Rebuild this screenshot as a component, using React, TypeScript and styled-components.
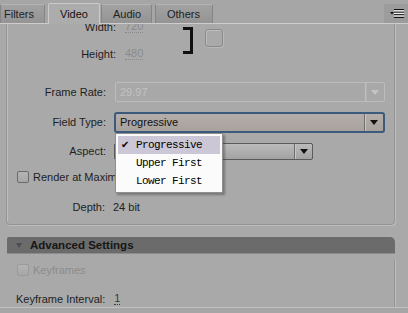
import * as React from 'react';
import styled, { createGlobalStyle, css } from 'styled-components';

const Global = createGlobalStyle`
    html, body {
        margin: 0;
        padding: 0;
        background: #a9a9a9;
    }
    body {
        font-family: 'Liberation Sans', Arial, sans-serif;
        font-size: 11px;
        color: #1e1e1e;
    }
`;

const Panel = styled.div`
    position: relative;
    width: 408px;
    height: 313px;
    overflow: hidden;
    background: #a9a9a9;
    display: flex;
    flex-direction: column;
`;

const TabBar = styled.div`
    height: 23px;
    flex: none;
    display: flex;
    align-items: flex-end;
    border-bottom: 1px solid #cdcdcd;
    background: #a6a6a6;
`;

const Tab = styled.div<{ $w: number; $pl: number; $mr: number; $active?: boolean }>`
    width: ${(p) => p.$w}px;
    margin-right: ${(p) => p.$mr}px;
    padding-left: ${(p) => p.$pl}px;
    box-sizing: border-box;
    height: 19px;
    display: flex;
    align-items: center;
    color: #222;
    background: linear-gradient(#a2a2a2, #949494);
    border: 1px solid #858585;
    border-top-color: #b4b4b4;
    border-bottom: none;
    border-radius: 2px 2px 0 0;
    ${(p) =>
        p.$active &&
        css`
            height: 21px;
            margin-bottom: -1px;
            background: #acacac;
            border-color: #cbcbcb;
            color: #111;
        `}
`;

const TabSpacer = styled.div`
    flex: 1;
`;

const MenuButton = styled.div`
    width: 24px;
    height: 19px;
    display: flex;
    align-items: center;
    justify-content: center;
    background: #9c9c9c;
`;

const Scroller = styled.div`
    flex: 1;
    overflow: hidden;
    position: relative;
`;

// content is scrolled down a little, so the first row sits under the tab bar
const ScrollInner = styled.div`
    margin-top: -12px;
    padding: 0 13px 0 6px;
`;

const GroupBox = styled.div`
    position: relative;
    border: 1px solid #949494;
    box-shadow: 1px 1px 0 #bdbdbd, inset 1px 1px 0 #bdbdbd;
    border-radius: 0 0 4px 4px;
    padding: 0 0 6px 0;
`;

const SizeBlock = styled.div`
    display: flex;
    align-items: flex-start;
`;

const SizeColumn = styled.div`
    width: 176px;
    display: flex;
    flex-direction: column;
`;

const Row = styled.div<{ $h: number; $mt?: number; $pl?: number }>`
    height: ${(p) => p.$h}px;
    margin-top: ${(p) => p.$mt || 0}px;
    padding-left: ${(p) => p.$pl || 0}px;
    display: flex;
    align-items: center;
    position: relative;
`;

const Label = styled.div<{ $w: number; $gap: number }>`
    width: ${(p) => p.$w}px;
    margin-right: ${(p) => p.$gap}px;
    text-align: right;
    flex: none;
    white-space: nowrap;
`;

const PlainLabel = styled.span<{ $gap: number }>`
    margin-right: ${(p) => p.$gap}px;
    white-space: nowrap;
`;

const Scrub = styled.span`
    color: #8a8a8a;
    border-bottom: 1px dotted #8a8a8a;
    line-height: 11px;
`;

const ScrubDark = styled(Scrub)`
    color: #3a3a3a;
    border-bottom-color: #3a3a3a;
`;

const Bracket = styled.div`
    width: 7px;
    height: 21px;
    margin-top: 14px;
    border: 3px solid #111;
    border-left: none;
`;

const LinkBox = styled.div`
    width: 18px;
    height: 18px;
    box-sizing: border-box;
    margin: 16px 0 0 12px;
    border: 1px solid #8a8a8a;
    border-radius: 3px;
    box-shadow: inset 1px 1px 0 #bcbcbc, 1px 1px 0 #b8b8b8;
`;

const SelectBox = styled.div<{ $w: number; $kind: 'disabled' | 'focused' | 'normal'; $h: number }>`
    width: ${(p) => p.$w}px;
    height: ${(p) => p.$h}px;
    box-sizing: border-box;
    display: flex;
    align-items: stretch;
    position: relative;
    border-radius: 2px;
    ${(p) =>
        p.$kind === 'disabled' &&
        css`
            border: 1px solid #bcbcbc;
            background: #a8a8a8;
            color: #c2c2c2;
        `}
    ${(p) =>
        p.$kind === 'focused' &&
        css`
            border: 2px solid #3b5a7c;
            border-radius: 3px;
            background: linear-gradient(#b4adaa, #a8a29f);
            color: #111;
        `}
    ${(p) =>
        p.$kind === 'normal' &&
        css`
            border: 1px solid #5a5a5a;
            background: linear-gradient(#bbbbbb, #a2a2a2);
            color: #111;
        `}
`;

const SelectText = styled.div`
    flex: 1;
    display: flex;
    align-items: center;
    padding-left: 4px;
    white-space: nowrap;
    overflow: hidden;
`;

const SelectArrow = styled.div<{ $w: number; $dim?: boolean }>`
    width: ${(p) => p.$w}px;
    flex: none;
    display: flex;
    align-items: center;
    justify-content: center;
    border-left: 1px solid ${(p) => (p.$dim ? '#c0c0c0' : '#6c6c6c')};
    box-shadow: inset 1px 0 0 ${(p) => (p.$dim ? '#b2b2b2' : '#c8c8c8')};
    &::after {
        content: '';
        border-left: 4px solid transparent;
        border-right: 4px solid transparent;
        border-top: 5px solid ${(p) => (p.$dim ? '#c4c4c4' : '#111')};
    }
`;

const Check = styled.div<{ $dim?: boolean }>`
    width: 12px;
    height: 12px;
    box-sizing: border-box;
    flex: none;
    border: 1px solid ${(p) => (p.$dim ? '#9a9a9a' : '#6a6a6a')};
    border-radius: 2px;
    background: linear-gradient(#b4b4b4, #a6a6a6);
    margin-right: 4px;
`;

const CheckLabel = styled.span<{ $dim?: boolean }>`
    color: ${(p) => (p.$dim ? '#8c8c8c' : '#1e1e1e')};
    white-space: nowrap;
`;

const DropMenu = styled.div`
    position: absolute;
    left: -1px;
    top: calc(100% + 2px);
    width: 108px;
    box-sizing: border-box;
    padding: 2px;
    background: #fbfbfb;
    border: 1px solid #8e8e8e;
    box-shadow: 2px 2px 2px rgba(60, 60, 60, 0.45);
    z-index: 5;
`;

const MenuItem = styled.div<{ $selected?: boolean }>`
    height: 18px;
    display: flex;
    align-items: center;
    font-family: 'Liberation Mono', 'Courier New', monospace;
    font-size: 11px;
    letter-spacing: -0.6px;
    color: #000;
    background: ${(p) => (p.$selected ? '#cbc7d6' : 'transparent')};
`;

const MenuCheck = styled.span`
    width: 15px;
    padding-left: 3px;
    flex: none;
    font-family: 'DejaVu Sans', sans-serif;
    font-size: 10px;
`;

const AdvHeader = styled.div`
    margin-top: 12px;
    margin-left: 1px;
    height: 16px;
    display: flex;
    align-items: center;
    background: #6b6b6b;
    border-radius: 2px 5px 0 0;
    border-bottom: 1px solid #8c8c8c;
    font-weight: bold;
    font-size: 11.5px;
    color: #161616;
`;

const Triangle = styled.span`
    margin: 0 8px 0 9px;
    border-left: 3.5px solid transparent;
    border-right: 3.5px solid transparent;
    border-top: 5px solid #4e4e4e;
`;

const AdvBox = styled.div`
    margin-left: 1px;
    border-right: 1px solid #949494;
    box-shadow: 1px 0 0 #bdbdbd;
    height: 80px;
`;

const Footer = styled.div`
    height: 5px;
    flex: none;
    border-top: 1px solid #c0c0c0;
    background: #a6a6a6;
`;

function PanelMenuIcon() {
    return (
        <svg width="16" height="12" viewBox="0 0 16 12">
            <path d="M2 4 L6 4 L4 6.5 Z" fill="#111" />
            <rect x="6" y="1" width="10" height="1.2" fill="#111" />
            <rect x="6" y="3.6" width="10" height="1.2" fill="#111" />
            <rect x="6" y="6.2" width="10" height="1.2" fill="#111" />
            <rect x="6" y="8.8" width="10" height="1.2" fill="#111" />
            <rect x="6" y="2.2" width="10" height="1.2" fill="#f2f2f2" />
            <rect x="6" y="4.8" width="10" height="1.2" fill="#f2f2f2" />
            <rect x="6" y="7.4" width="10" height="1.2" fill="#f2f2f2" />
        </svg>
    );
}

const fieldTypes = ['Progressive', 'Upper First', 'Lower First'];

export default function App() {
    const [fieldType] = React.useState('Progressive');

    return (
        <>
            <Global />
            <Panel>
                <TabBar>
                    <Tab $w={45} $pl={3} $mr={3}>Filters</Tab>
                    <Tab $w={52} $pl={11} $mr={1} $active>Video</Tab>
                    <Tab $w={51} $pl={11} $mr={3}>Audio</Tab>
                    <Tab $w={58} $pl={11} $mr={0}>Others</Tab>
                    <TabSpacer />
                    <MenuButton>
                        <PanelMenuIcon />
                    </MenuButton>
                </TabBar>
                <Scroller>
                    <ScrollInner>
                        <GroupBox>
                            <SizeBlock>
                                <SizeColumn>
                                    <Row $h={28}>
                                        <Label $w={109} $gap={9}>Width:</Label>
                                        <Scrub>720</Scrub>
                                    </Row>
                                    <Row $h={26}>
                                        <Label $w={109} $gap={9}>Height:</Label>
                                        <Scrub>480</Scrub>
                                    </Row>
                                </SizeColumn>
                                <Bracket />
                                <LinkBox />
                            </SizeBlock>

                            <Row $h={22} $mt={14}>
                                <Label $w={99} $gap={9}>Frame Rate:</Label>
                                <SelectBox $w={270} $h={20} $kind="disabled">
                                    <SelectText>29.97</SelectText>
                                    <SelectArrow $w={18} $dim />
                                </SelectBox>
                            </Row>

                            <Row $h={22} $mt={8}>
                                <Label $w={99} $gap={8}>Field Type:</Label>
                                <SelectBox $w={271} $h={21} $kind="focused">
                                    <SelectText>{fieldType}</SelectText>
                                    <SelectArrow $w={18} />
                                    <DropMenu>
                                        {fieldTypes.map((t) => (
                                            <MenuItem key={t} $selected={t === fieldType}>
                                                <MenuCheck>{t === fieldType ? '✔' : ''}</MenuCheck>
                                                {t}
                                            </MenuItem>
                                        ))}
                                    </DropMenu>
                                </SelectBox>
                            </Row>

                            <Row $h={22} $mt={7}>
                                <Label $w={99} $gap={8}>Aspect:</Label>
                                <SelectBox $w={199} $h={17} $kind="normal">
                                    <SelectText>Square Pixels (1.0)</SelectText>
                                    <SelectArrow $w={17} />
                                </SelectBox>
                            </Row>

                            <Row $h={22} $mt={4} $pl={10}>
                                <Check />
                                <CheckLabel>Render at Maximum Depth</CheckLabel>
                            </Row>

                            <Row $h={22} $mt={8}>
                                <Label $w={98} $gap={8}>Depth:</Label>
                                24 bit
                            </Row>
                        </GroupBox>

                        <AdvHeader>
                            <Triangle />
                            Advanced Settings
                        </AdvHeader>
                        <AdvBox>
                            <Row $h={22} $mt={5} $pl={10}>
                                <Check $dim />
                                <CheckLabel $dim>Keyframes</CheckLabel>
                            </Row>
                            <Row $h={22} $mt={7} $pl={9}>
                                <PlainLabel $gap={9}>Keyframe Interval:</PlainLabel>
                                <ScrubDark>1</ScrubDark>
                            </Row>
                        </AdvBox>
                    </ScrollInner>
                </Scroller>
                <Footer />
            </Panel>
        </>
    );
}
